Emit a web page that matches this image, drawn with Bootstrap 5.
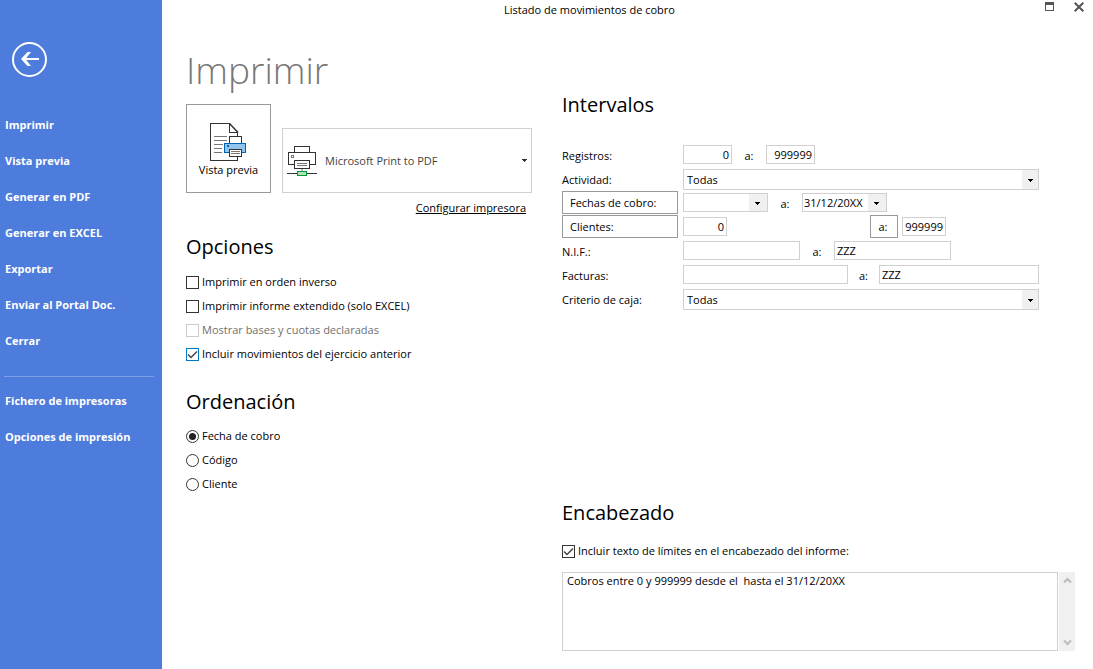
<!DOCTYPE html>
<html lang="es">
<head>
<meta charset="utf-8">
<meta name="viewport" content="width=device-width, initial-scale=1">
<title>Listado de movimientos de cobro</title>
<link href="https://cdn.jsdelivr.net/npm/bootstrap@5.3.0/dist/css/bootstrap.min.css" rel="stylesheet">
<style>
  body { font-family: "Open Sans", "Noto Sans", sans-serif; font-size: 11px; line-height: 16px; color: #000; background: #fff; }
  .side-panel { width: 162px; background: #4e7cdc; padding-top: 42px; }
  .back-btn { width: 35px; height: 35px; margin: 0 0 30px 12px; }
  .side-panel .nav-link { color: #fff; font-size: 11px; font-weight: 700; line-height: 36px; padding: 0 5px; white-space: nowrap; }
  .side-rule { height: 1px; background: #7d9fe6; margin: 17px 8px 6px 4px; }
  .title-bar { height: 20px; }
  .title-text { line-height: 20px; }
  .win-controls { width: 76px; padding-left: 18px; }
  .win-btn { width: 29px; height: 13px; }
  .plain-btn { border: 0; background: none; padding: 0; display: flex; align-items: center; justify-content: center; color: inherit; }
  .work-area { padding: 0 18px 18px 24px; gap: 30px; }
  .print-col { width: 346px; flex: none; }
  .page-title { font-size: 37px; font-weight: 300; line-height: 50px; color: #777; margin: 25px 0 9px; }
  .section-title { font-size: 20px; font-weight: 400; line-height: 28px; margin: 0; }
  .options-title { margin-top: 15px; }
  .options-list { margin-top: 9px; }
  .order-title { margin-top: 22px; }
  .range-title { margin: 71px 0 24px; }
  .header-check { margin: 12px 0 9px !important; }
  .print-target { gap: 11px; }
  .preview-btn { width: 85px; height: 89px; border: 1px solid #999; flex-direction: column; padding-top: 3px; }
  .printer-btn { height: 65px; border: 1px solid #d0d0d0; color: #444; padding: 0 4px; }
  .config-link { color: #000; line-height: 20px; margin: 5px 6px 0 0; }
  .tick-row { height: 24px; min-height: 24px; padding: 0; margin: 0; display: flex; align-items: center; gap: 3px; }
  .tick-row .form-check-input { float: none; flex: none; width: 13px; height: 13px; margin: 0; border-color: #333; background-color: #fff; box-shadow: none; }
  .tick-row .form-check-input[type=checkbox] { border-radius: 0; }
  .tick-row .form-check-input[type=checkbox]:checked { background-size: 11px 11px; background-image: url("data:image/svg+xml,%3Csvg xmlns='http://www.w3.org/2000/svg' viewBox='0 0 11 11'%3E%3Cpath d='M1 5.5 4 8.5 10 2.5' fill='none' stroke='%23444' stroke-width='1.5'/%3E%3C/svg%3E"); }
  .tick-row .form-check-input[type=radio]:checked { background-size: 11px 11px; background-image: url("data:image/svg+xml,%3Csvg xmlns='http://www.w3.org/2000/svg' viewBox='0 0 11 11'%3E%3Ccircle cx='5.5' cy='5.5' r='3.5' fill='%23222'/%3E%3C/svg%3E"); }
  .tick-row .tick-focus { border-color: #0078c8; }
  .tick-row .form-check-input:disabled { border-color: #ccc; opacity: 1; }
  .tick-row .form-check-input:disabled ~ .form-check-label { color: #707070; opacity: 1; }
  .range-rows { margin-right: 36px; }
  .range-row { height: 24px; display: flex; align-items: flex-start; }
  .range-name { width: 116px; margin-right: 5px; flex: none; line-height: 26px; }
  .range-btn { border: 1px solid #999; height: 23px; justify-content: flex-start; padding-left: 7px; }
  .range-to { line-height: 26px; flex: none; text-align: center; width: 34px; }
  .range-to-narrow { width: 31px; }
  .client-to { border: 1px solid #999; height: 23px; width: 28px; margin: 0 4px 0 143px; padding-right: 2px; }
  .range-row .form-control, .range-row .form-select { border: 1px solid #d0d0d0; border-radius: 0; font-size: 11px; line-height: 15px; height: 19px; min-height: 0; padding: 0 2px; color: #000; margin-top: 2px; box-shadow: none; }
  .range-row .form-select { height: 21px; padding-left: 3px; background: url("data:image/svg+xml,%3Csvg xmlns='http://www.w3.org/2000/svg' viewBox='0 0 16 19'%3E%3Cpath fill='%23f0f0f0' d='M0 0h16v19H0z'/%3E%3Cpath shape-rendering='crispEdges' d='M6 9h5v1h-1v1H9v1H8v-1H7v-1H6z'/%3E%3C/svg%3E") right center / 16px 19px no-repeat #fff; }
  .range-row .date-select { height: 19px; width: 85px; padding-left: 1px; background-image: url("data:image/svg+xml,%3Csvg xmlns='http://www.w3.org/2000/svg' viewBox='0 0 18 17'%3E%3Cpath fill='%23f0f0f0' d='M0 0h18v17H0z'/%3E%3Cpath shape-rendering='crispEdges' d='M6 8h5v1h-1v1H9v1H8v-1H7V9H6z'/%3E%3C/svg%3E"); background-size: 18px 17px; }
  .range-row .w-num { width: 49px; }
  .range-row .w-client { width: 44px; }
  .range-row .w-nif { width: 117px; }
  .range-row .w-invoice { width: 165px; }
  .header-text { border: 1px solid #d0d0d0; border-radius: 0; height: 79px; font-size: 11px; line-height: 16px; padding: 0 4px; resize: none; color: #000; overflow: hidden; }
  .scroll-strip { width: 16px; background: #f0f0f0; padding: 5px 0; flex: none; margin-left: 1px; }
</style>
</head>
<body>
<div class="d-flex min-vh-100">
  <aside class="side-panel flex-shrink-0">
    <button type="button" class="plain-btn back-btn" aria-label="Volver">
      <svg width="35" height="35" viewBox="0 0 35 35" fill="none" stroke="#fff" stroke-width="2"><circle cx="17.500" cy="17.500" r="16.500"/><path d="M27 17H11"/><path d="M9 17l6.500-7H19l-5.500 7L19 24h-3.500z" fill="#fff" stroke="none"/></svg>
    </button>
    <nav class="nav flex-column">
      <a class="nav-link" href="#">Imprimir</a>
      <a class="nav-link" href="#">Vista previa</a>
      <a class="nav-link" href="#">Generar en PDF</a>
      <a class="nav-link" href="#">Generar en EXCEL</a>
      <a class="nav-link" href="#">Exportar</a>
      <a class="nav-link" href="#">Enviar al Portal Doc.</a>
      <a class="nav-link" href="#">Cerrar</a>
      <div class="side-rule"></div>
      <a class="nav-link" href="#">Fichero de impresoras</a>
      <a class="nav-link" href="#">Opciones de impresión</a>
    </nav>
  </aside>

  <main class="flex-fill d-flex flex-column">
    <header class="title-bar d-flex">
      <div class="title-text flex-fill text-center">Listado de movimientos de cobro</div>
      <div class="win-controls d-flex">
        <button type="button" class="plain-btn win-btn" aria-label="Maximizar"><svg width="9" height="9" viewBox="0 0 9 9" shape-rendering="crispEdges"><path d="M0 0h9v9H0zM1 3v5h7V3z" fill="#555" fill-rule="evenodd"/></svg></button>
        <button type="button" class="plain-btn win-btn" aria-label="Cerrar"><svg width="10" height="10" viewBox="0 0 10 10"><path d="M.7.7l8.600 8.600M9.300.7.700 9.300" stroke="#555" stroke-width="2"/></svg></button>
      </div>
    </header>

    <form class="work-area flex-fill d-flex">
      <section class="print-col">
        <h1 class="page-title">Imprimir</h1>
        <div class="print-target d-flex align-items-end">
          <button type="button" class="plain-btn preview-btn flex-shrink-0">
            <svg width="37" height="39" viewBox="0 0 37 39" fill="none" stroke="#333" shape-rendering="crispEdges">
              <path d="M27.500 34v3.500H.5V.5h19M27.500 13V9.500h-8v-9"/><path d="M19.500.5l8.500 9" shape-rendering="auto" stroke-width="1.500"/>
              <path d="M4 13.500h13M4 17.500h13M4 21.500h9M4 25.500h8M4 29.500h8" stroke="#777"/>
              <path d="M19.500 20v-6.500h12V20" fill="#fff"/><path d="M14.500 20.500h21v9h-21z" fill="#92c5ee" stroke="#0063b1"/><path d="M17 22h2v2h-2z" fill="#0063b1" stroke="none"/>
              <path d="M19.500 26.500h12v7h-12z" fill="#fff"/><path d="M21 28.500h9M21 30.500h9" stroke="#777"/>
            </svg>
            <span>Vista previa</span>
          </button>
          <button type="button" class="plain-btn printer-btn flex-fill">
            <svg class="flex-shrink-0" width="30" height="32" viewBox="0 0 30 32" fill="none" stroke="#333" shape-rendering="crispEdges">
              <path d="M7.500 7V1.500h15V7M1.500 7.500h27v12h-27z"/><path d="M4.500 10.500h2v2h-2z" stroke="#777"/>
              <path d="M7.500 15.500h15v8h-15z" fill="#fff"/><path d="M10 18.500h10M10 20.500h10" stroke="#777"/>
              <path d="M15 24v3" stroke="#bbb" stroke-width="2"/><path d="M0 28.500h30"/><path d="M10.500 26.500h9v4h-9z" fill="#b5dfbc" stroke="#009938"/>
            </svg>
            <span class="flex-fill text-start ps-2">Microsoft Print to PDF</span>
            <svg width="5" height="3" viewBox="0 0 5 3" shape-rendering="crispEdges"><path d="M0 0h5v1H4v1H3v1H2V2H1V1H0z" fill="#333"/></svg>
          </button>
        </div>
        <div class="text-end config-link"><a href="#" class="text-reset">Configurar impresora</a></div>

        <h2 class="section-title options-title">Opciones</h2>
        <div class="options-list">
          <div class="form-check tick-row"><input class="form-check-input" type="checkbox" id="inv"><label class="form-check-label" for="inv">Imprimir en orden inverso</label></div>
          <div class="form-check tick-row"><input class="form-check-input" type="checkbox" id="ext"><label class="form-check-label" for="ext">Imprimir informe extendido (solo EXCEL)</label></div>
          <div class="form-check tick-row"><input class="form-check-input" type="checkbox" id="bas" disabled><label class="form-check-label" for="bas">Mostrar bases y cuotas declaradas</label></div>
          <div class="form-check tick-row"><input class="form-check-input tick-focus" type="checkbox" id="mov" checked><label class="form-check-label" for="mov">Incluir movimientos del ejercicio anterior</label></div>
        </div>

        <h2 class="section-title order-title">Ordenación</h2>
        <div class="mt-2">
          <div class="form-check tick-row"><input class="form-check-input" type="radio" name="orden" id="fec" checked><label class="form-check-label" for="fec">Fecha de cobro</label></div>
          <div class="form-check tick-row"><input class="form-check-input" type="radio" name="orden" id="cod"><label class="form-check-label" for="cod">Código</label></div>
          <div class="form-check tick-row"><input class="form-check-input" type="radio" name="orden" id="cli"><label class="form-check-label" for="cli">Cliente</label></div>
        </div>
      </section>

      <section class="flex-fill d-flex flex-column">
        <h2 class="section-title range-title">Intervalos</h2>
        <div class="range-rows">
          <div class="range-row"><label class="range-name" for="r1">Registros:</label><input class="form-control w-num text-end" id="r1" value="0"><label class="range-to" for="r2">a:</label><input class="form-control w-num text-end" id="r2" value="999999"></div>
          <div class="range-row"><label class="range-name" for="act">Actividad:</label><select class="form-select flex-fill" id="act"><option>Todas</option></select></div>
          <div class="range-row"><button type="button" class="plain-btn range-btn range-name">Fechas de cobro:</button><select class="form-select date-select" aria-label="Fecha inicial"><option></option></select><label class="range-to" for="f2">a:</label><select class="form-select date-select" id="f2"><option>31/12/20XX</option></select></div>
          <div class="range-row"><button type="button" class="plain-btn range-btn range-name">Clientes:</button><input class="form-control w-client text-end" aria-label="Cliente inicial" value="0"><button type="button" class="plain-btn client-to">a:</button><input class="form-control w-client text-end" aria-label="Cliente final" value="999999"></div>
          <div class="range-row"><label class="range-name" for="n1">N.I.F.:</label><input class="form-control w-nif" id="n1"><label class="range-to" for="n2">a:</label><input class="form-control w-nif" id="n2" value="ZZZ"></div>
          <div class="range-row"><label class="range-name" for="c1">Facturas:</label><input class="form-control w-invoice" id="c1"><label class="range-to range-to-narrow" for="c2">a:</label><input class="form-control flex-fill w-auto" id="c2" value="ZZZ"></div>
          <div class="range-row"><label class="range-name" for="caja">Criterio de caja:</label><select class="form-select flex-fill" id="caja"><option>Todas</option></select></div>
        </div>

        <h2 class="section-title mt-auto">Encabezado</h2>
        <div class="form-check tick-row header-check"><input class="form-check-input" type="checkbox" id="lim" checked><label class="form-check-label" for="lim">Incluir texto de límites en el encabezado del informe:</label></div>
        <div class="d-flex">
          <textarea class="form-control header-text" aria-label="Texto del encabezado">Cobros entre 0 y 999999 desde el  hasta el 31/12/20XX</textarea>
          <div class="scroll-strip d-flex flex-column justify-content-between align-items-center">
            <svg width="9" height="7" viewBox="0 0 9 7" fill="none" stroke="#bbb" stroke-width="2"><path d="M1 5.500 4.500 2 8 5.500"/></svg>
            <svg width="9" height="7" viewBox="0 0 9 7" fill="none" stroke="#bbb" stroke-width="2"><path d="M1 1.500 4.500 5 8 1.500"/></svg>
          </div>
        </div>
      </section>
    </form>
  </main>
</div>
<script src="https://cdn.jsdelivr.net/npm/bootstrap@5.3.0/dist/js/bootstrap.bundle.min.js"></script>
</body>
</html>
